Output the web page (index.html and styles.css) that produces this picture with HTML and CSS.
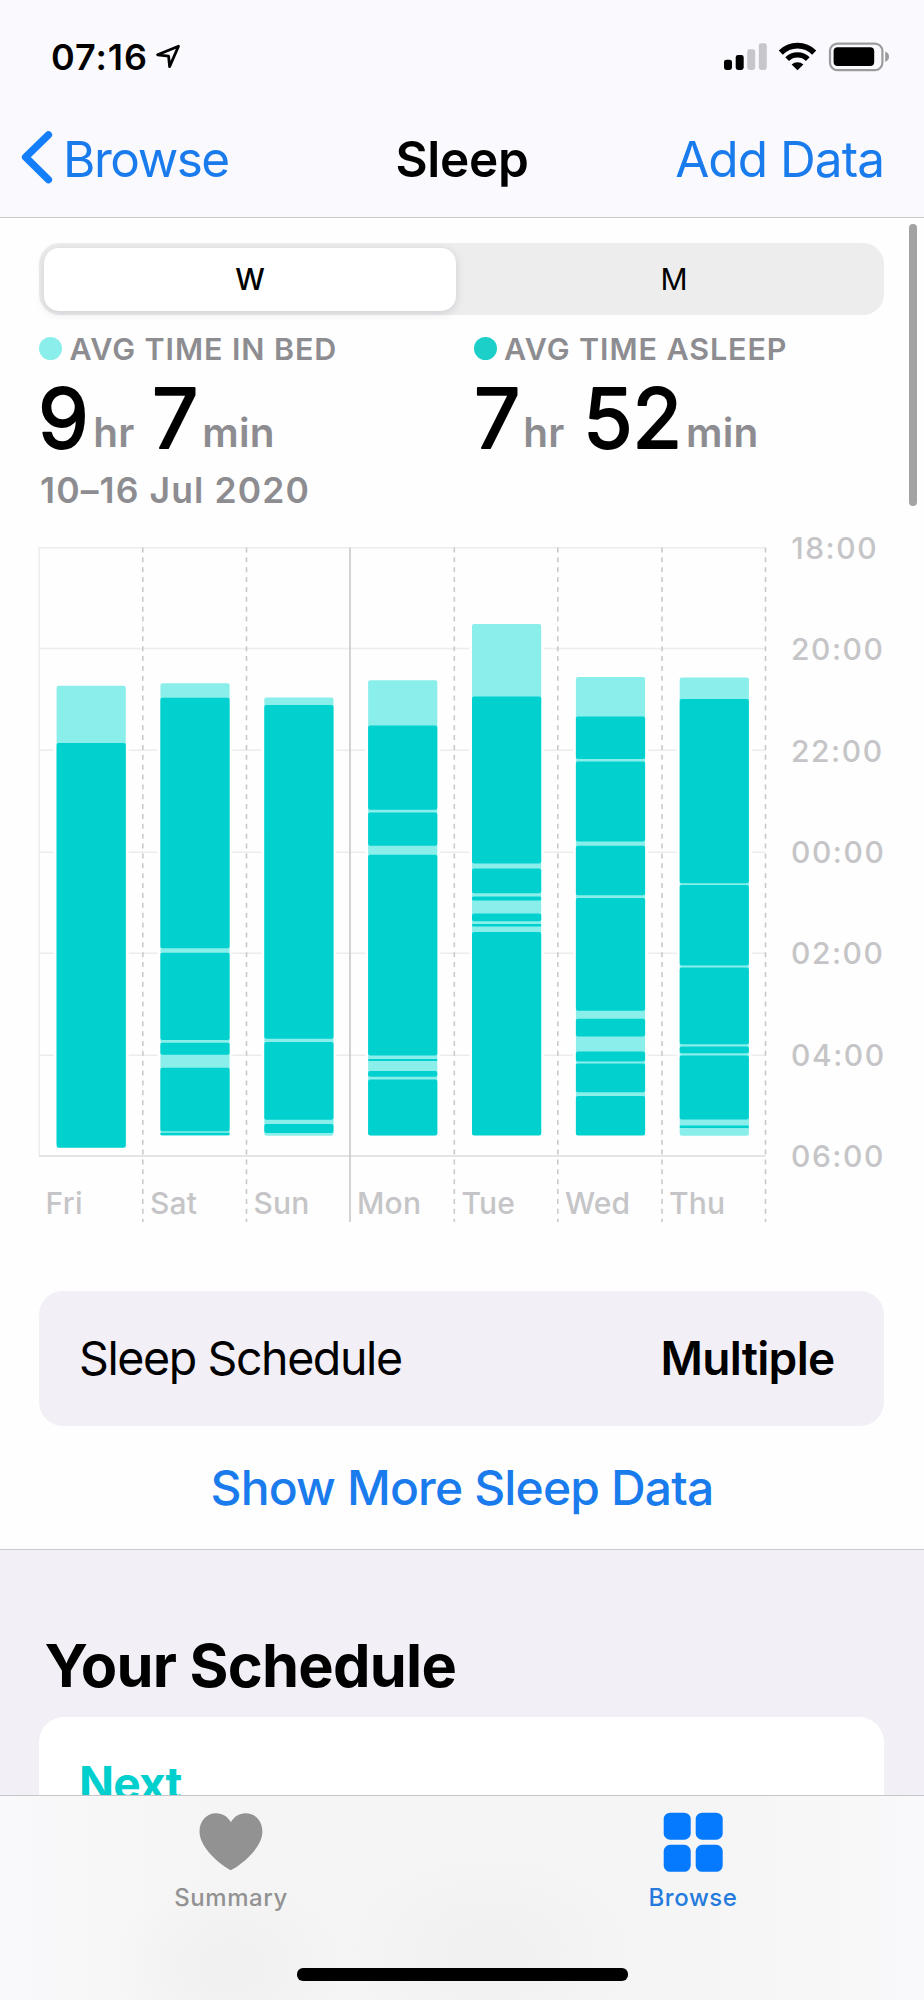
FILE: index.html
```html
<!DOCTYPE html>
<html lang="en">
<head>
<meta charset="utf-8">
<title>Sleep</title>
<link rel="stylesheet" href="styles.css">
</head>
<body>
<div class="screen">
  <header class="header">
    <div class="status">
      <div class="status-left">
        <span class="clock">07:16</span>
        <svg class="location" width="28" height="28" viewBox="154 42 28 28"><path d="M178.5 46.2 157.6 54.8 168.6 56.2 169.6 66.6Z" fill="none" stroke="#000" stroke-width="2.8" stroke-linejoin="round"/></svg>
      </div>
      <svg class="status-icons" width="170" height="34" viewBox="722 40 170 34">
        <g fill="#000"><rect x="724" y="59.7" width="8" height="10.3" rx="2.4"/><rect x="735.7" y="55" width="8" height="15" rx="2.4"/></g>
        <g fill="#c7c7cb"><rect x="747.2" y="49.3" width="8" height="20.7" rx="2.4"/><rect x="758.8" y="43.3" width="8" height="26.7" rx="2.4"/></g>
        <g fill="none" stroke="#000"><path d="M780.8 52.6a23.6 23.6 0 0 1 33.4 0" stroke-width="5.8"/><path d="M787.2 59.2a14.6 14.6 0 0 1 20.6 0" stroke-width="5.2"/></g>
        <path d="M791.6 64.6a8.6 8.6 0 0 1 11.8 0L797.5 70.2Z"/>
        <rect x="830" y="43.6" width="52.4" height="26.6" rx="7.5" fill="none" stroke="#9b9b9d" stroke-width="2.2"/>
        <rect x="833.6" y="47.2" width="40.6" height="18.8" rx="4"/>
        <path d="M885.2 51.6q3.8 1.6 3.8 5.2t-3.8 5.2z" fill="#9b9b9d"/>
      </svg>
    </div>
    <nav class="nav">
      <a class="back"><svg width="34" height="56" viewBox="20 129 34 56"><path d="M48.4 134.8 25.6 157.2 48.4 179.6" fill="none" stroke="#157efb" stroke-width="7.4" stroke-linecap="round" stroke-linejoin="round"/></svg><span>Browse</span></a>
      <h1 class="title">Sleep</h1>
      <a class="add">Add Data</a>
    </nav>
  </header>

  <main class="content">
    <div class="segmented"><span class="segment selected">W</span><span class="segment month">M</span></div>

    <section class="stats">
      <div class="stat">
        <div class="legend"><i class="dot bed"></i><span>AVG TIME IN BED</span></div>
        <svg class="value" width="420" height="88" viewBox="0 0 420 88">
          <text class="num" x="-1" y="75.500">9</text><text class="unit" x="54.3" y="75">hr</text><text class="num" x="113" y="75.500">7</text><text class="unit" x="163.3" y="75">min</text>
        </svg>
      </div>
      <div class="stat">
        <div class="legend"><i class="dot asleep"></i><span>AVG TIME ASLEEP</span></div>
        <svg class="value" width="420" height="88" viewBox="0 0 420 88">
          <text class="num" x="0" y="75.500">7</text><text class="unit" x="49.3" y="75">hr</text><text class="num" x="109" y="75.500">52</text><text class="unit" x="212.1" y="75">min</text>
        </svg>
      </div>
    </section>
    <p class="date">10–16 Jul 2020</p>

    <svg class="chart" width="924" height="720" viewBox="0 520 924 720">
      <g class="grid">
        <path d="M39 547.8H765.500M39 648.5H765.500M39 750.3H765.500M39 852.2H765.500M39 953.2H765.500M39 1055.2H765.500M39.2 547.2V1156"/>
        <path class="base" d="M39 1156H765.500"/>
      </g>
      <path class="dashes" d="M142.8 547.5V1222M246.5 547.5V1222M454.3 547.5V1222M557.8 547.5V1222M662 547.5V1222M765.500 547.5V1222"/>
      <path class="week" d="M350 547.5V1222"/>

      <g class="halo">
        <rect x="53.5" y="683" width="75.2" height="468"/><rect x="157.3" y="680" width="75.2" height="458"/><rect x="261.3" y="694" width="75.2" height="444"/><rect x="365" y="677" width="75.2" height="461"/><rect x="469" y="621" width="75.2" height="517"/><rect x="573" y="674" width="75.2" height="464"/><rect x="676.7" y="675" width="75.2" height="463"/>
      </g>
      <g transform="translate(56.6 0)">
        <rect class="b" y="685.8" width="69.2" height="460" rx="2"/>
        <rect class="a" y="743" width="69.2" height="404.8" rx="2"/>
      </g>
      <g transform="translate(160.4 0)">
        <rect class="b" y="683.2" width="69.2" height="452.3" rx="2"/>
        <rect class="a" y="697.8" width="69.2" height="250.4" rx="2"/><rect class="a" y="952.8" width="69.2" height="87.2" rx="2"/><rect class="a" y="1042.8" width="69.2" height="12" rx="2"/><rect class="a" y="1067.8" width="69.2" height="63.4" rx="2"/><rect class="a" y="1132.8" width="69.2" height="2.4" rx="1"/>
      </g>
      <g transform="translate(264.3 0)">
        <rect class="b" y="697.4" width="69.2" height="138" rx="2"/><rect class="b" y="800" width="69.2" height="335.8" rx="2"/>
        <rect class="a" y="705" width="69.2" height="333.8" rx="2"/><rect class="a" y="1042" width="69.2" height="77.8" rx="2"/><rect class="a" y="1124" width="69.2" height="9" rx="2"/>
      </g>
      <g transform="translate(368.1 0)">
        <rect class="b" y="680.2" width="69.2" height="455" rx="2"/>
        <rect class="a" y="725.4" width="69.2" height="84.4" rx="2"/><rect class="a" y="812.4" width="69.2" height="33.4" rx="2"/><rect class="a" y="854.8" width="69.2" height="200.6" rx="2"/><rect class="a" y="1059" width="69.2" height="2" rx="1"/><rect class="a" y="1071" width="69.2" height="5.8" rx="2"/><rect class="a" y="1079.4" width="69.2" height="56" rx="2"/>
      </g>
      <g transform="translate(472 0)">
        <rect class="b" y="624" width="69.2" height="511" rx="2"/>
        <rect class="a" y="696.6" width="69.2" height="167" rx="2"/><rect class="a" y="868.6" width="69.2" height="24.6" rx="2"/><rect class="a" y="896.6" width="69.2" height="4" rx="1.5"/><rect class="a" y="913.6" width="69.2" height="7.6" rx="2"/><rect class="a" y="924" width="69.2" height="2.4" rx="1"/><rect class="a" y="932" width="69.2" height="203.4" rx="2"/>
      </g>
      <g transform="translate(575.9 0)">
        <rect class="b" y="677" width="69.2" height="458" rx="2"/>
        <rect class="a" y="716.6" width="69.2" height="42.4" rx="2"/><rect class="a" y="761.6" width="69.2" height="80" rx="2"/><rect class="a" y="845.8" width="69.2" height="49.4" rx="2"/><rect class="a" y="898" width="69.2" height="112.8" rx="2"/><rect class="a" y="1018.8" width="69.2" height="17.8" rx="2"/><rect class="a" y="1051.4" width="69.2" height="10.2" rx="2"/><rect class="a" y="1063.6" width="69.2" height="28.6" rx="2"/><rect class="a" y="1096" width="69.2" height="39.4" rx="2"/>
      </g>
      <g transform="translate(679.7 0)">
        <rect class="b" y="677.4" width="69.2" height="458.4" rx="2"/>
        <rect class="a" y="699" width="69.2" height="184.2" rx="2"/><rect class="a" y="885" width="69.2" height="80.6" rx="2"/><rect class="a" y="967.6" width="69.2" height="76.6" rx="2"/><rect class="a" y="1046.6" width="69.2" height="6.6" rx="2"/><rect class="a" y="1055.6" width="69.2" height="64" rx="2"/><rect class="a" y="1125.4" width="69.2" height="2.6" rx="1"/>
      </g>

      <g class="hours">
        <text x="791.2" y="559">18:00</text><text x="791" y="660">20:00</text><text x="791" y="761.5">22:00</text><text x="791" y="863.3">00:00</text><text x="791" y="964.3">02:00</text><text x="791" y="1066">04:00</text><text x="791" y="1167">06:00</text>
      </g>
      <g class="days">
        <text x="45.6" y="1214">Fri</text><text x="150" y="1214">Sat</text><text x="253.4" y="1214">Sun</text><text x="357" y="1214">Mon</text><text x="461.4" y="1214">Tue</text><text x="565" y="1214">Wed</text><text x="669" y="1214">Thu</text>
      </g>
    </svg>

    <div class="schedule-row"><span class="schedule-label">Sleep Schedule</span><span class="schedule-value">Multiple</span></div>
    <a class="more">Show More Sleep Data</a>

    <section class="your-schedule">
      <h2>Your Schedule</h2>
      <div class="next-card"><span>Next</span></div>
    </section>
  </main>

  <footer class="tabbar">
    <div class="tabs">
      <a class="tab"><svg width="64" height="60" viewBox="199.500 1812 64 60"><path d="M231.400 1870C229 1870 200 1851 200 1831.500C200 1820.500 207.500 1813.200 216.500 1813.200C223.500 1813.200 228.500 1817 231.400 1822.200C234.300 1817 239.300 1813.200 246.300 1813.200C255.500 1813.200 262.900 1820.500 262.900 1831.500C262.900 1851 233.800 1870 231.400 1870Z" fill="#929292"/></svg><span>Summary</span></a>
      <a class="tab active"><svg width="64" height="60" viewBox="0 0 64 60"><g fill="#057aff"><rect x="2.700" y=".7" width="27" height="27" rx="6.500"/><rect x="34.700" y=".7" width="27" height="27" rx="6.500"/><rect x="2.700" y="32.800" width="27" height="27" rx="6.500"/><rect x="34.700" y="32.800" width="27" height="27" rx="6.500"/></g></svg><span>Browse</span></a>
    </div>
    <div class="home"></div>
  </footer>
  <div class="scrollbar"></div>
</div>
</body>
</html>
```
FILE: styles.css
```css
* { box-sizing: border-box; }
body { margin: 0; font-family: Inter, "Liberation Sans", sans-serif; color: #000; background: #fff; }
h1, h2, p { margin: 0; }

.screen { position: relative; display: flex; flex-direction: column; width: 924px; height: 2000px; overflow: hidden; background: #fefefe; }

/* Header */
.header { flex: none; height: 218px; background: #fafafe; border-bottom: 1px solid #c9c9cb; }
.status { display: flex; justify-content: space-between; height: 113px; padding: 40px 32px 0 51px; }
.status-left { display: flex; height: 34px; }
.clock { font-size: 36px; font-weight: 600; line-height: 34px; letter-spacing: .93px; }
.location { margin: 2px 0 0 6px; }
.nav { display: grid; grid-template-columns: 1fr auto 1fr; align-items: center; height: 92px; padding: 0 40px 0 20px; font-size: 49.5px; line-height: 60px; color: #1a7bed; }
.back { display: flex; align-items: center; letter-spacing: -1.45px; }
.back svg { margin-top: -4px; }
.back span { margin-left: 9px; }
.title { margin-left: 20px; font-size: 49.5px; font-weight: 600; letter-spacing: -.3px; color: #000; }
.add { text-align: right; letter-spacing: -.95px; }

/* Scrolling content */
.content { display: flex; flex-direction: column; flex: 1 0 0; min-height: 0; overflow: hidden; }
.segmented { flex: none; display: grid; grid-template-columns: 412px 1fr; width: 845px; height: 72px; margin: 25px 0 0 39px; padding: 5px; border-radius: 21px; background: #ededed; }
.segment { font-size: 30px; line-height: 63px; text-align: center; border-radius: 15px; }
.selected { font-weight: 500; font-size: 29.5px; background: #fff; box-shadow: 0 2px 8px rgba(60, 60, 100, .18); }
.month { padding-left: 13px; }
.stats { flex: none; display: grid; grid-template-columns: 434.5px 1fr; margin: 18px 0 0 39px; }
.legend { display: flex; align-items: center; height: 31px; font-size: 30.5px; font-weight: 600; line-height: 31px; letter-spacing: .9px; color: #8d8d91; }
.dot { width: 23px; height: 23px; margin-right: 7.5px; border-radius: 50%; }
.bed { background: #8aeeea; }
.asleep { background: #1ccfc9; }
.value { display: block; margin-top: 8px; overflow: visible; }
.num { font-size: 82px; font-weight: 400; stroke: #000; stroke-width: 2px; stroke-linejoin: round; letter-spacing: -.6px; }
.unit { font-size: 40.5px; font-weight: 600; letter-spacing: .2px; fill: #8d8d91; }
.date { flex: none; height: 44px; margin: 8.5px 0 0 40px; font-size: 35.5px; font-weight: 600; line-height: 44px; letter-spacing: 1.12px; color: #8d8d91; }

/* Chart */
.chart { flex: none; display: block; margin-top: 7px; }
.grid path { fill: none; stroke: #ececec; stroke-width: 1.4; }
.grid .base { stroke: #e4e4e4; stroke-width: 2; }
.dashes { fill: none; stroke: #cacaca; stroke-width: 1.6; stroke-dasharray: 5 4.87; }
.week { stroke: #cbcbcb; stroke-width: 1.7; }
.halo { fill: #fefefe; }
.b { fill: #8aeeea; }
.a { fill: #00d1cf; }
.hours { font-size: 30px; font-weight: 500; letter-spacing: 1.55px; fill: #c5c5c7; }
.days { font-size: 30px; font-weight: 500; letter-spacing: .2px; fill: #c5c5c7; }

.schedule-row { flex: none; display: flex; justify-content: space-between; width: 845px; height: 135px; margin: 51px 0 0 39px; padding: 0 49.5px 0 40px; border-radius: 24px; background: #f2eff7; line-height: 134px; }
.schedule-label { font-size: 46.5px; letter-spacing: -1.4px; }
.schedule-value { font-size: 46px; font-weight: 600; letter-spacing: -.69px; }
.more { flex: none; height: 60px; margin-top: 32px; font-size: 48px; font-weight: 500; line-height: 60px; letter-spacing: -.85px; text-align: center; color: #1a7bed; }

.your-schedule { flex: none; height: 500px; margin-top: 31px; padding: 80px 40px 0 39px; border-top: 1px solid #cbcad1; background: #f2eff7; }
.your-schedule h2 { margin-left: 5.5px; font-size: 59.5px; line-height: 70px; letter-spacing: -.75px; }
.next-card { height: 400px; margin-top: 17px; padding: 36px 40px; border-radius: 25px; background: #fff; font-size: 46px; font-weight: 700; line-height: 60px; letter-spacing: -.8px; color: #00cfcd; }

/* Tab bar */
.tabbar { flex: none; display: flex; flex-direction: column; align-items: center; height: 205px; border-top: 1px solid #c6c6c8; background: radial-gradient(ellipse 120px 90px at 231px 170px, #f1f1f1 20%, transparent), radial-gradient(ellipse 150px 100px at 490px 155px, #f1f1f1 20%, transparent), linear-gradient(90deg, #f9f9fb, #f5f5f5 25%, #f5f5f5 75%, #f9f9fb); }
.tabs { display: grid; grid-template-columns: 1fr 1fr; width: 100%; height: 172px; padding-top: 16px; }
.tab { display: flex; flex-direction: column; align-items: center; font-size: 24px; font-weight: 500; line-height: 30px; letter-spacing: .55px; color: #929292; }
.tab span { margin-top: 11px; }
.active { color: #257bdd; }
.home { width: 331px; height: 12.5px; border-radius: 6px; background: #000; }

.scrollbar { position: absolute; top: 224px; left: 909px; width: 8px; height: 282px; border-radius: 4px; background: #a3a3a3; }
```
